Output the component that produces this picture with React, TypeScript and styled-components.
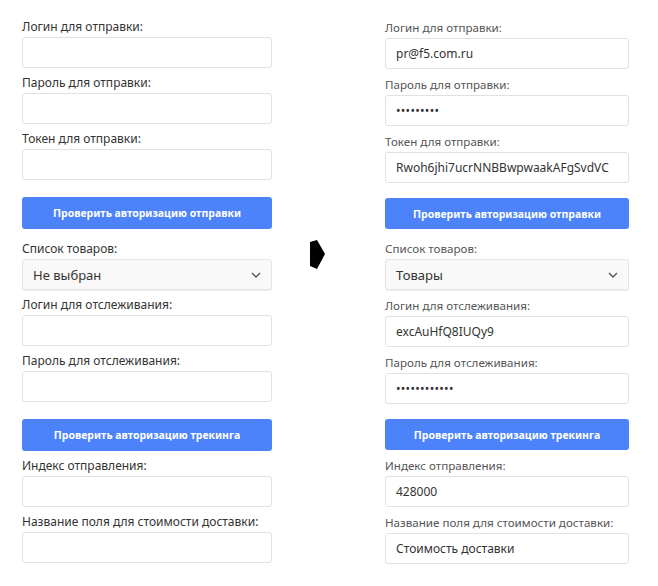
import styled, { createGlobalStyle } from 'styled-components';

const GlobalStyle = createGlobalStyle`
    body {
        margin: 0;
        background: #ffffff;
        font-family: 'Noto Sans', 'Open Sans', sans-serif;
    }
`;

const Page = styled.div`
    display: flex;
    flex-direction: row;
    align-items: flex-start;
    width: 658px;
    height: 586px;
`;

const Field = styled.div`
    display: flex;
    flex-direction: column;
    margin-bottom: 6px;
`;

const Button = styled.div<{ mt: number; mb: number }>`
    margin-top: ${({ mt }) => mt}px;
    margin-bottom: ${({ mb }) => mb}px;
    height: 32px;
    border-radius: 3px;
    background: #4c83fa;
    color: #fff;
    font-weight: 700;
    font-size: 10.5px;
    display: flex;
    align-items: center;
    justify-content: center;
`;

const Panel = styled.div<{ width: number; small?: boolean }>`
    display: flex;
    flex-direction: column;
    width: ${({ width }) => width}px;
    padding-top: ${({ small }) => (small ? 19 : 18)}px;
    font-size: ${({ small }) => (small ? '11.6px' : '12px')};
    color: ${({ small }) => (small ? '#555' : '#333')};

    ${Field} {
        margin-bottom: ${({ small }) => (small ? 7 : 6)}px;
    }

    ${Button} {
        height: ${({ small }) => (small ? 31 : 32)}px;
    }
`;

const LeftColumn = styled.div`
    padding-left: 22px;
`;

const ArrowColumn = styled.div`
    display: flex;
    width: 75px;
    padding-left: 38px;
    padding-top: 240px;
`;

const Label = styled.label`
    line-height: 18px;
    margin-bottom: 1px;
    white-space: nowrap;
`;

const Input = styled.div`
    box-sizing: border-box;
    height: 31px;
    border: 1px solid #e1e1e1;
    border-radius: 3px;
    background: #fff;
    padding: 0 10px;
    display: flex;
    align-items: center;
    font-size: 12px;
    color: #333;
    white-space: nowrap;
    overflow: hidden;
`;

const Dots = styled.span`
    font-size: 12px;
    letter-spacing: 0.3px;
`;

const Select = styled(Input)`
    justify-content: space-between;
    background: #f9f9f9;
    border-color: #e6e6e6;
    box-shadow: 0 1px 1px rgba(0, 0, 0, 0.08);
    font-size: 13px;
`;

const Chevron = () => (
    <svg width="10" height="6" viewBox="0 0 10 6">
        <path d="M1 1l4 4 4-4" fill="none" stroke="#555" strokeWidth="1.4" />
    </svg>
);

type Values = {
    login?: string;
    pass?: string;
    token?: string;
    goods: string;
    trackLogin?: string;
    trackPass?: string;
    index?: string;
    costField?: string;
};

const Form = ({ v, width, small }: { v: Values; width: number; small?: boolean }) => (
    <Panel width={width} small={small}>
        <Field>
            <Label>Логин для отправки:</Label>
            <Input>{v.login}</Input>
        </Field>
        <Field>
            <Label>Пароль для отправки:</Label>
            <Input>{v.pass && <Dots>{v.pass}</Dots>}</Input>
        </Field>
        <Field>
            <Label>Токен для отправки:</Label>
            <Input>{v.token}</Input>
        </Field>
        <Button mt={small ? 8 : 11} mb={11}>
            Проверить авторизацию отправки
        </Button>
        <Field>
            <Label>Список товаров:</Label>
            <Select>
                {v.goods}
                <Chevron />
            </Select>
        </Field>
        <Field>
            <Label>Логин для отслеживания:</Label>
            <Input>{v.trackLogin}</Input>
        </Field>
        <Field>
            <Label>Пароль для отслеживания:</Label>
            <Input>{v.trackPass && <Dots>{v.trackPass}</Dots>}</Input>
        </Field>
        <Button mt={small ? 8 : 11} mb={small ? 7 : 6}>
            Проверить авторизацию трекинга
        </Button>
        <Field>
            <Label>Индекс отправления:</Label>
            <Input>{v.index}</Input>
        </Field>
        <Field>
            <Label>Название поля для стоимости доставки:</Label>
            <Input>{v.costField}</Input>
        </Field>
    </Panel>
);

const App = () => (
    <Page>
        <GlobalStyle />
        <LeftColumn>
            <Form width={250} v={{ goods: 'Не выбран' }} />
        </LeftColumn>
        <ArrowColumn>
            <svg width="16" height="30" viewBox="0 0 16 30">
                <polygon points="0,2 7,0 15,14 7,29 0,26" fill="#000" />
            </svg>
        </ArrowColumn>
        <Form
            width={244}
            small
            v={{
                login: 'pr@f5.com.ru',
                pass: '•••••••••',
                token: 'Rwoh6jhi7ucrNNBBwpwaakAFgSvdVC',
                goods: 'Товары',
                trackLogin: 'excAuHfQ8IUQy9',
                trackPass: '••••••••••••',
                index: '428000',
                costField: 'Стоимость доставки',
            }}
        />
    </Page>
);

export default App;
